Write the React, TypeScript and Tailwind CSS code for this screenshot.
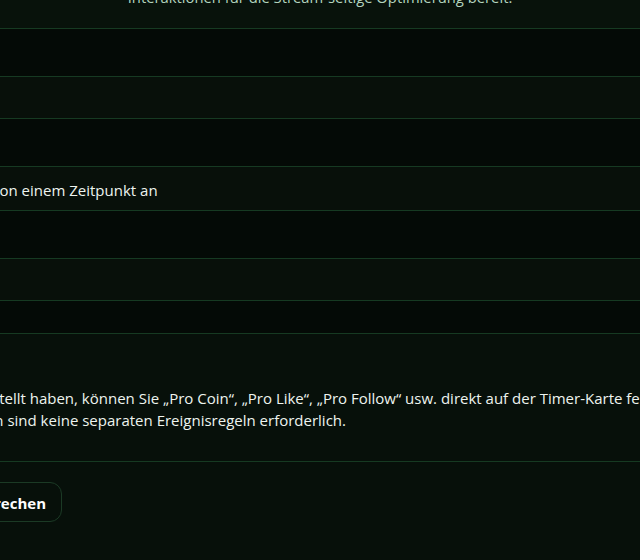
import React from "react";

const rows = [
  { h: "h-[47px]", bg: "bg-[#040a06]", text: "" },
  { h: "h-[41px]", bg: "bg-[#08100a]", text: "" },
  { h: "h-[47px]", bg: "bg-[#040a06]", text: "" },
  { h: "h-[43px]", bg: "bg-[#08100a]", text: "von einem Zeitpunkt an" },
  { h: "h-[47px]", bg: "bg-[#040a06]", text: "" },
  { h: "h-[41px]", bg: "bg-[#08100a]", text: "" },
  { h: "h-[32px]", bg: "bg-[#040a06]", text: "" },
];

export default function App() {
  return (
    <div className="w-[640px] h-[560px] overflow-hidden bg-[#07100a] font-['Open_Sans',sans-serif] text-[15px] leading-[22px]">
      <div className="-ml-[400px] w-[1440px]">
        <div className="bg-[#08120b] -mt-[14px] pb-[20px] text-center text-[14.8px] text-[#b3d4be]">
          Interaktionen für die Stream-seitige Optimierung bereit.
        </div>
        <div className="border-b border-[#163a22]">
          {rows.map((r, i) => (
            <div key={i} className={`border-t border-[#163a22] ${r.bg}`}>
              <div className={`${r.h} pt-[2px] grid grid-cols-[392px_1fr] items-center text-[#eef4ef]`}>
                <div />
                <div>{r.text}</div>
              </div>
            </div>
          ))}
        </div>
        <div className="pt-[53px] pb-[30px] pl-[234px] text-[#eef4ef] border-b border-[#163a22]">
          <p>Wenn Sie Regeln eingestellt haben, können Sie „Pro Coin“, „Pro Like“, „Pro Follow“ usw. direkt auf der Timer-Karte festlegen.</p>
          <p>Für diese Timeraktionen sind keine separaten Ereignisregeln erforderlich.</p>
        </div>
        <div className="pt-[20px] flex justify-end w-[462px]">
          <button className="h-[40px] pt-[2px] px-[15px] rounded-[12px] border border-[#1b3a25] font-bold text-white">
            Abbrechen
          </button>
        </div>
      </div>
    </div>
  );
}
